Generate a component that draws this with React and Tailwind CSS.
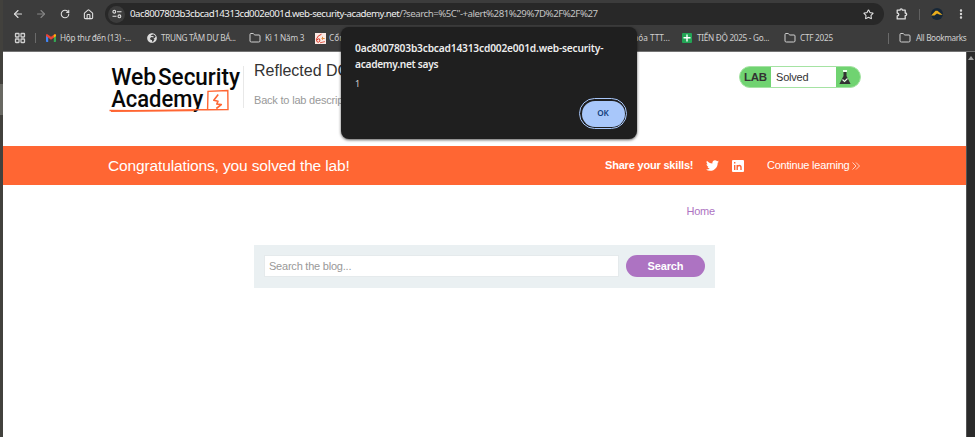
import {
  ArrowLeft, ArrowRight, RotateCw, House, Star, EllipsisVertical, Folder, LayoutGrid,
} from 'lucide-react';
import { FaTwitter, FaGlobeAfrica } from 'react-icons/fa';

const uiFont = "font-['Noto_Sans','Open_Sans',sans-serif]";
const pageFont = "font-['Liberation_Sans',Arial,sans-serif]";

function TuneIcon() {
  return (
    <svg width="10" height="10" viewBox="0 0 10 10" fill="none" stroke="#e3e3e3" strokeWidth="1.1">
      <circle cx="2.3" cy="2.7" r="1.4" />
      <path d="M5 2.7h4.5M.5 7.3h4" />
      <circle cx="7.4" cy="7.3" r="1.4" />
    </svg>
  );
}

function PuzzleIcon() {
  return (
    <svg width="12" height="12" viewBox="0 0 12 12" className="ml-[12px] shrink-0">
      <path d="M1.200 2.100H4Q4.100.9 5.200.9T6.400 2.100H9.200V5Q10.700 5.100 10.700 6.300T9.200 7.600V10.900H1.200V8Q2.800 7.800 2.800 6.500T1.200 5z" fill="none" stroke="#dedede" strokeWidth="1.300" strokeLinejoin="round" />
    </svg>
  );
}

function GmailIcon() {
  return (
    <svg width="10" height="8" viewBox="0 0 10 8">
      <path d="M0 1.2L2.2 2.8V8H.7Q0 8 0 7.3z" fill="#4285f4" />
      <path d="M10 1.2L7.8 2.8V8h1.5q.7 0 .7-.7z" fill="#34a853" />
      <path d="M0 1.2Q.4-.5 1.8.4L5 2.8 8.2.4Q9.6-.5 10 1.2V2L5 5.8 0 2z" fill="#ea4335" />
      <path d="M7.8.7q1.8-1.3 2.2.5V2L7.8 3.7z" fill="#fbbc04" />
    </svg>
  );
}

function RedBadgeIcon() {
  return (
    <svg width="11" height="11" viewBox="0 0 11 11">
      <path d="M0 0h11v11H0z" fill="#fbe9e4" />
      <path d="M6.500 1.2Q2.500 2.5 1.4 6.2 1.4 9.6 3.600 9.3 5.600 8.2 4.6 6 3 5.2 2 7" fill="none" stroke="#dc3a2a" strokeWidth="1" />
      <path d="M6.5 5.5h3.2M7.500 3.800v3" stroke="#e28a3c" strokeWidth="1" />
      <path d="M5 9.800l5-1.200" stroke="#dc3a2a" strokeWidth=".8" />
    </svg>
  );
}

function Toolbar() {
  return (
    <div className="flex h-[28px] items-center">
      <ArrowLeft size={12} strokeWidth={2.2} className="ml-[9px] shrink-0 text-[#dedede]" />
      <ArrowRight size={12} strokeWidth={2.2} className="ml-[11px] shrink-0 text-[#858585]" />
      <RotateCw size={10} strokeWidth={2.6} className="ml-[13px] shrink-0 text-[#dedede]" />
      <House size={11} strokeWidth={2.4} className="ml-[13px] shrink-0 text-[#dedede]" />
      <div className="ml-[11px] flex h-[22px] w-[779px] shrink-0 items-center rounded-full bg-[#282828]">
        <div className="ml-[3px] flex size-[17px] shrink-0 items-center justify-center rounded-full bg-[#3c3c3c]"><TuneIcon /></div>
        <div className="ml-[5px] w-[480px] shrink-0 whitespace-nowrap text-[9.7px] leading-[14px] tracking-[-0.49px] text-[#c4c4c4]">
          <span className="text-[#f1f1f1]">0ac8007803b3cbcad14313cd002e001d.web-security-academy.net</span>/?search=%5C"-+alert%281%29%7D%2F%2F%27
        </div>
        <Star size={11} strokeWidth={2.3} className="mr-[10px] ml-auto text-[#e3e3e3]" />
      </div>
      <PuzzleIcon />
      <div className="ml-[11px] h-[11px] w-px shrink-0 bg-[#606060]" />
      <svg width="12" height="12" viewBox="0 0 12 12" className="ml-[11px] shrink-0">
        <circle cx="6" cy="6" r="6" fill="#172737" />
        <path d="M.2 7.4L4.5 2.7h2L11.6 7 8.2 6.500 6 5.6 3.5 7.400z" fill="#e9ad1d" />
      </svg>
      <EllipsisVertical size={12} strokeWidth={2.8} className="ml-[12px] shrink-0 text-[#dedede]" />
    </div>
  );
}

function Label({ className, children }) {
  return <span className={`${className} shrink-0 whitespace-nowrap`}>{children}</span>;
}

function Bookmarks() {
  return (
    <div className="flex h-[23px] items-center pb-[3px] text-[8.2px] leading-[12px] text-[#d0d0d0]">
      <LayoutGrid size={12} strokeWidth={2.6} className="ml-[11px] shrink-0" />
      <div className="ml-[9px] h-[10px] w-px shrink-0 bg-[#6a6a6a]" />
      <div className="ml-[10px] shrink-0"><GmailIcon /></div>
      <Label className="ml-[4px] w-[72px] tracking-[-0.26px]">Hộp thư đến (13) -...</Label>
      <FaGlobeAfrica size={10} className="ml-[15px] shrink-0 text-[#dcdcdc]" />
      <Label className="ml-[4px] w-[77px] tracking-[-0.31px]">TRUNG TÂM DỰ BÁ...</Label>
      <Folder size={12} strokeWidth={2} className="ml-[11px] shrink-0" />
      <Label className="ml-[4px] w-[39px] tracking-[-0.22px]">Kì 1 Năm 3</Label>
      <div className="ml-[11px] shrink-0"><RedBadgeIcon /></div>
      <Label className="ml-[3px] w-[300px]">Cổng</Label>
      <Label className="w-[47px] tracking-[-0.03px]">khóa TTT...</Label>
      <svg width="10" height="10" viewBox="0 0 10 10" className="ml-[6px] shrink-0">
        <rect width="10" height="10" rx="1" fill="#23a455" />
        <path d="M5 1.5v7M1.5 4.8h7" stroke="#fff" strokeWidth="1.4" />
      </svg>
      <Label className="ml-[5px] w-[74px] tracking-[-0.29px]">TIẾN ĐỘ 2025 - Go...</Label>
      <Folder size={12} strokeWidth={2} className="ml-[13px] shrink-0" />
      <Label className="ml-[4px] w-[33px] tracking-[-0.25px]">CTF 2025</Label>
      <div className="ml-[55px] h-[11px] w-px shrink-0 bg-[#6a6a6a]" />
      <Folder size={12} strokeWidth={2} className="ml-[10px] shrink-0" />
      <Label className="ml-[5px] w-[52px] tracking-[-0.36px]">All Bookmarks</Label>
    </div>
  );
}

function Logo() {
  return (
    <svg width="134" height="50" viewBox="0 0 134 50" className="overflow-visible font-['Roboto',sans-serif]">
      <g fill="#080808" fontWeight="500">
        <text x="2.200" y="18.400" fontSize="24.500" textLength="45" lengthAdjust="spacingAndGlyphs">Web</text>
        <text x="49" y="18.400" fontSize="24.500" textLength="82" lengthAdjust="spacingAndGlyphs">Security</text>
        <text x="2.200" y="40" fontSize="24" textLength="92" lengthAdjust="spacingAndGlyphs">Academy</text>
      </g>
      <g fill="none" stroke="#ff6633" strokeWidth="1.4">
        <path d="M.5 43.500Q50 44 98.600 42.500L99 24.300 118.800 23.500 119 42.600 98 42.800" />
        <path d="M2 44.200L84 43.600" />
        <path d="M109.200 27.500L104.800 33.300 109 34.300 107.800 37 112.300 37.600 107.300 41.500" strokeWidth="1.600" strokeLinejoin="round" />
      </g>
    </svg>
  );
}

function LabStatus() {
  return (
    <div className="mt-[14px] flex h-[22px] w-[122px] overflow-hidden rounded-full border border-[#a5e3a3] bg-[#70d371] text-[#333]">
      <div className="w-[31px] pl-[4px] text-[11.5px] leading-[20px] font-bold tracking-[-0.3px]">LAB</div>
      <div className="w-[65px] bg-white pl-[5px] text-[11px] leading-[20px] tracking-[-0.2px]">Solved</div>
      <svg width="12" height="14" viewBox="0 0 12 14" className="mt-[3px] ml-[3px]">
        <path d="M4 1h4" stroke="#e8ffe8" strokeWidth="1.8" />
        <path d="M4.500 2h3v4l4.100 8H.4l4.100-8z" fill="#333" />
        <path d="M3.500 9.500l2 2 3-3" fill="none" stroke="#e8ffe8" strokeWidth="1.1" />
      </svg>
    </div>
  );
}

function Dialog() {
  return (
    <div className={`absolute top-[27px] left-[341px] flex h-[112px] w-[296px] flex-col rounded-[8px] bg-[#1f1f1f] pt-[13px] pl-[14px] text-[#ededed] shadow-[0_1px_3px_rgba(0,0,0,0.65)] ${uiFont}`}>
      <div className="text-[10.2px] leading-[16px] font-semibold whitespace-nowrap">
        <div className="tracking-[-0.18px]">0ac8007803b3cbcad14313cd002e001d.web-security-</div>
        <div className="tracking-[-0.3px]">academy.net says</div>
      </div>
      <div className="mt-[6px] text-[9px] leading-[12px] text-[#d0d0d0]">1</div>
      <button className="mt-[8px] ml-[224px] flex h-[31px] w-[48px] items-center justify-center rounded-full border-[1.5px] border-[#a8c7fa] bg-[#1f1f1f] p-[1.5px]">
        <span className="flex size-full items-center justify-center rounded-full bg-[#a8c7fa] text-[8.2px] font-semibold tracking-[-0.1px] text-[#123e7c]">OK</span>
      </button>
    </div>
  );
}

export default function App() {
  return (
    <div className="relative flex h-[437px] w-[975px] overflow-hidden bg-[#3c3c3c]">
      <div className="flex w-[3px] flex-col bg-[#42413d] pt-[84px]">
        <div className="h-[31px] bg-[#686862]" />
      </div>
      <div className="w-[972px]">
        <div className={`h-[52px] border-b border-[#737373] ${uiFont}`}>
          <Toolbar />
          <Bookmarks />
        </div>
        <div className="flex h-[385px]">
          <main className={`w-[963px] bg-white ${pageFont}`}>
            <header className="flex h-[94px] pl-[106px]">
              <div className="pt-[15px]"><Logo /></div>
              <div className="mt-[14px] h-[42px] w-px bg-[#e8e8e8]" />
              <div className="ml-[10px] w-[485px] whitespace-nowrap">
                <h1 className="mt-[10px] text-[16px] leading-[18px] text-[#333]">Reflected DOM XSS</h1>
                <a className="mt-[14px] block text-[11px] leading-[13px] tracking-[-0.2px] text-[#999]">Back to lab description</a>
              </div>
              <LabStatus />
            </header>
            <section className="flex h-[39px] items-center bg-[#ff6633] pl-[105px] text-[11px] whitespace-nowrap text-white">
              <p className="w-[497px] text-[15.5px] tracking-[-0.13px]">Congratulations, you solved the lab!</p>
              <b className="w-[88px] tracking-[-0.19px]">Share your skills!</b>
              <FaTwitter size={13} className="ml-[13px]" />
              <svg width="12" height="12" viewBox="0 0 12 12" className="ml-[13px]">
                <rect width="12" height="12" rx="1" fill="#fff" />
                <path d="M2.700 5v5M5.200 10V5M5.200 7.500Q5.400 5.500 7.200 5.500 9 5.500 9 7.500V10M2.700 2v1.500" fill="none" stroke="#ff6633" strokeWidth="1.4" />
              </svg>
              <span className="ml-[23px] w-[85px] tracking-[-0.22px]">Continue learning</span>
              <svg width="8" height="8" viewBox="0 0 8 8" fill="none" stroke="#fff" strokeWidth=".7">
                <path d="M.5.5L4 4 .5 7.500M4 .5L7.500 4 4 7.500" />
              </svg>
            </section>
            <div className="ml-[251px] w-[461px]">
              <nav className="flex h-[60px] justify-end pt-[20px] text-[11px] leading-[13px] tracking-[-0.2px] text-[#ad73c2]"><a>Home</a></nav>
              <form className="flex h-[43px] gap-[7px] bg-[#eaf0f2] pt-[10px] pl-[10px]">
                <div className="h-[22px] w-[355px] border border-[#e5eaec] bg-white pl-[4px] text-[11px] leading-[20px] tracking-[-0.22px] text-[#999]">Search the blog...</div>
                <button type="button" className="h-[22px] w-[79px] rounded-full bg-[#ad73c2] text-[11px] leading-[22px] font-bold tracking-[-0.15px] text-white">Search</button>
              </form>
            </div>
          </main>
          <div className="flex w-[9px] justify-center border-l border-[#555] bg-[#2b2b2b] pt-[4px]">
            <div className="h-0 w-0 border-x-[3px] border-b-[4px] border-x-transparent border-b-[#a0a0a0]" />
          </div>
        </div>
      </div>
      <Dialog />
    </div>
  );
}
